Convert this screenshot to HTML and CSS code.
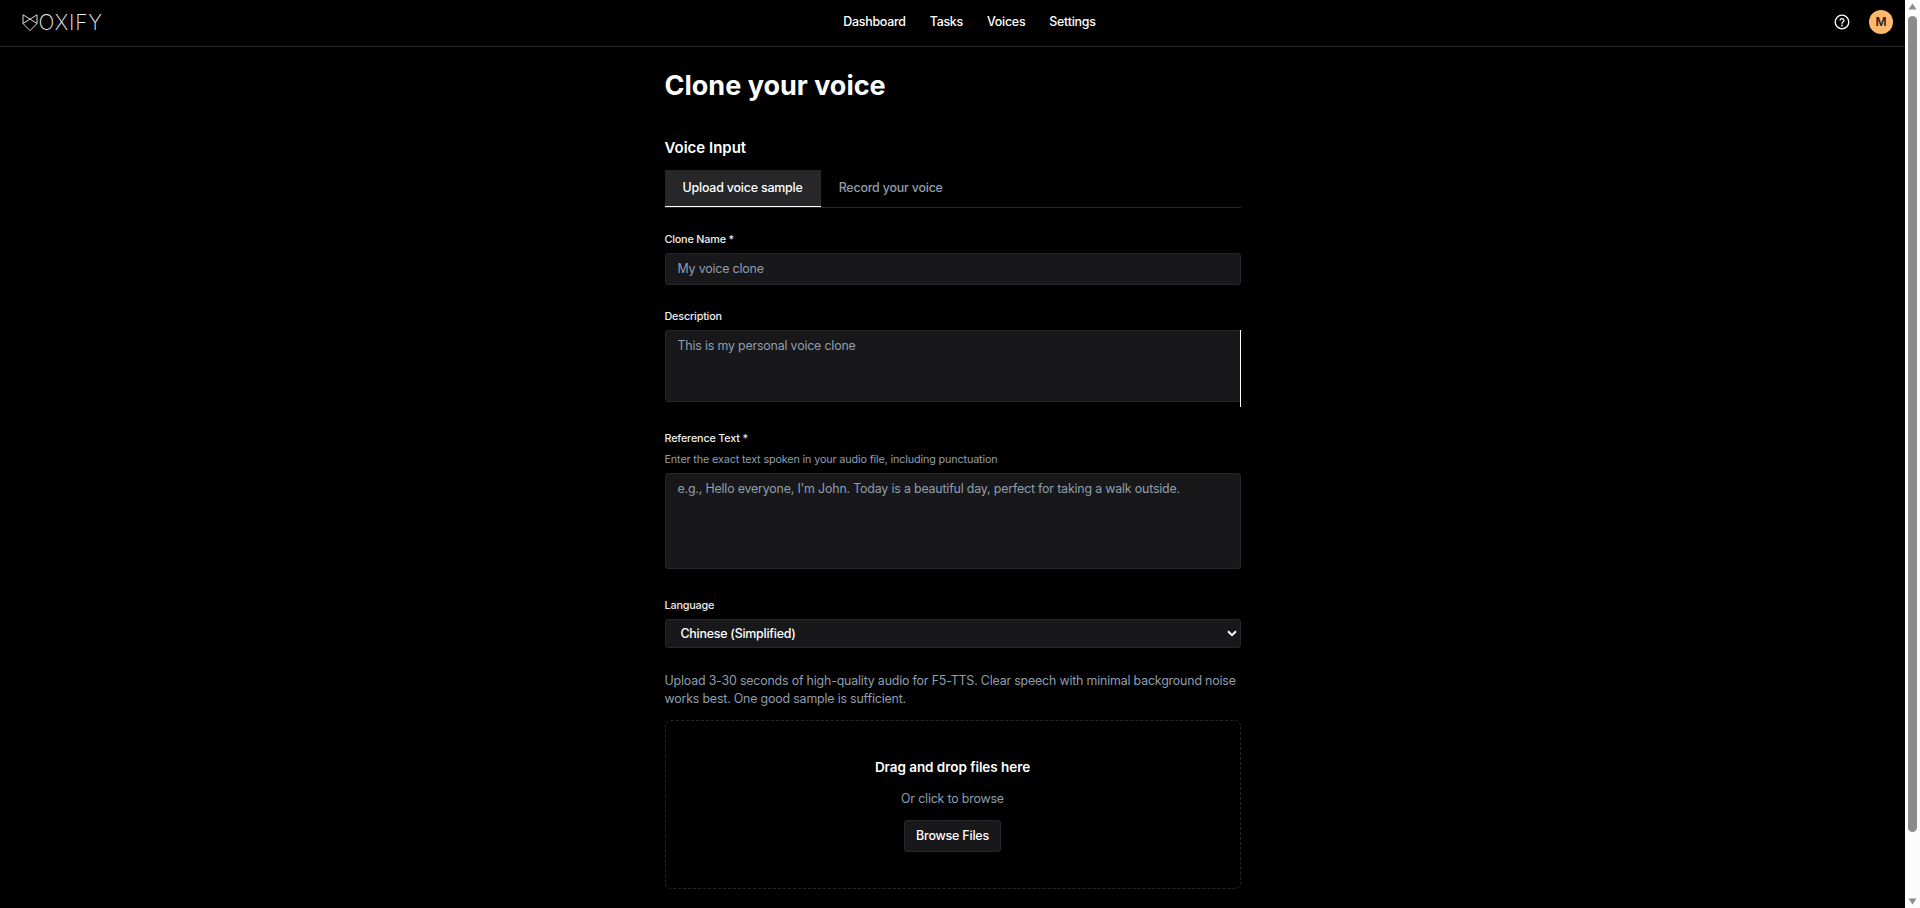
FILE: index.html
```html
<!DOCTYPE html>
<html lang="en">
<head>
<meta charset="utf-8">
<title>Voxify - Clone your voice</title>
<link rel="stylesheet" href="styles.css">
</head>
<body>
<div class="page">
  <header class="header">
    <a class="logo">
      <svg class="logo-mark" width="16" height="18" viewBox="0 0 16 18"><path d="M1 .8v8.700L8 16.600l7-7.100V.8L1 9.500M1 .8l14 8.700" /></svg>
      <span class="logo-text">OXIFY</span>
    </a>
    <nav class="nav"><a>Dashboard</a><a>Tasks</a><a>Voices</a><a>Settings</a></nav>
    <div class="actions">
      <svg class="help" width="16" height="16" viewBox="0 0 16 16"><circle cx="8" cy="8" r="6.800"/><path d="M6.100 6.200a1.950 1.950 0 0 1 3.850.4c0 1.300-1.950 1.600-1.950 2.700M8 11v1.100"/></svg>
      <span class="avatar">M</span>
    </div>
  </header>
  <main class="main">
    <h1 class="title">Clone your voice</h1>
    <h2 class="subtitle">Voice Input</h2>
    <div class="tabs"><button class="tab tab-active">Upload voice sample</button><button class="tab">Record your voice</button></div>
    <label class="label">Clone Name *</label>
    <input class="field name" placeholder="My voice clone">
    <label class="label">Description</label>
    <div class="description"><textarea class="field desc" placeholder="This is my personal voice clone"></textarea></div>
    <label class="label">Reference Text *</label>
    <p class="hint">Enter the exact text spoken in your audio file, including punctuation</p>
    <textarea class="field ref" placeholder="e.g., Hello everyone, I'm John. Today is a beautiful day, perfect for taking a walk outside."></textarea>
    <label class="label">Language</label>
    <div class="field select"><span>Chinese (Simplified)</span><svg width="10" height="7" viewBox="0 0 10 7"><path d="M1 1.200l4 4 4-4"/></svg></div>
    <p class="info">Upload 3-30 seconds of high-quality audio for F5-TTS. Clear speech with minimal background noise works best. One good sample is sufficient.</p>
    <div class="drop">
      <strong class="drop-title">Drag and drop files here</strong>
      <span class="drop-text">Or click to browse</span>
      <button class="browse">Browse Files</button>
    </div>
  </main>
</div>
<div class="scrollbar">
  <svg width="9" height="7" viewBox="0 0 9 7"><path d="M4.500 .5L8.500 6.500H.5z"/></svg>
  <div class="thumb"></div>
  <svg width="9" height="7" viewBox="0 0 9 7"><path d="M4.500 6.500L8.500 .5H.5z"/></svg>
</div>
</body>
</html>
```
FILE: styles.css
```css
* { box-sizing: border-box; margin: 0; padding: 0; }
body { display: flex; height: 908px; overflow: hidden; background: #000; color: #fff; font: 12.4px/18px Inter, sans-serif; letter-spacing: -0.18px; }
button, input, textarea { font: inherit; letter-spacing: inherit; color: inherit; border: 0; background: none; outline: none; }
.page { flex: 1; }
.header { display: flex; justify-content: space-between; align-items: center; height: 47px; padding: 0 12px 3px 21px; border-bottom: 1px solid #27272a; }
.logo { display: flex; align-items: center; width: 84px; padding: 2px 0 0 .5px; }
.logo-mark { flex: none; fill: none; stroke: #dcdcdc; stroke-width: 1; }
.logo-text { margin-left: 1px; font-size: 21px; font-weight: 200; line-height: 20px; letter-spacing: .8px; color: #eee; }
.nav { display: flex; gap: 24px; padding-top: 1px; font-weight: 500; letter-spacing: -0.25px; }
.actions { display: flex; justify-content: flex-end; align-items: center; gap: 19px; }
.help { fill: none; stroke: #fff; stroke-width: 1.3; stroke-linecap: round; }
.avatar { width: 24px; height: 24px; border-radius: 50%; background: #ffb86c; color: #222; font-size: 12px; font-weight: 600; line-height: 24px; text-align: center; }
.main { width: 576px; margin: 0 auto; padding-top: 19px; }
.title { height: 40px; font-size: 27px; font-weight: 700; line-height: 40px; letter-spacing: 0; }
.subtitle { height: 24px; margin-top: 30px; font-size: 15px; font-weight: 600; line-height: 24px; letter-spacing: 0; }
.tabs { display: flex; height: 38px; margin: 10px 0 24px; border-bottom: 1px solid #27272a; }
.tab { height: 37px; padding: 0 18px; border-bottom: 1px solid transparent; font-weight: 500; color: #8f9fae; }
.tab-active { background: #27272a; border-bottom-color: #fff; color: #fff; }
.label { display: block; height: 16px; margin-bottom: 5px; font-size: 10.8px; font-weight: 500; line-height: 16px; color: #eee; }
.field { display: block; width: 100%; padding: 6px 12px; border: 1px solid #27272a; border-radius: 3px; background: #18181b; resize: none; }
.field::placeholder { color: #8f9fae; opacity: 1; }
.name { height: 32px; margin-bottom: 24px; padding-bottom: 7px; }
.description { position: relative; height: 77px; margin-bottom: 24px; }
.description::after { content: ""; position: absolute; top: 0; right: 0; width: 1px; height: 77px; background: #fff; }
.desc { height: 72px; }
.hint { height: 16px; margin-bottom: 5px; font-size: 10.8px; line-height: 16px; letter-spacing: -0.14px; color: #8f9fae; }
.ref { height: 96px; margin-bottom: 29px; }
.select { display: flex; justify-content: space-between; align-items: center; height: 29px; padding: 0 3px 0 15px; font-weight: 500; letter-spacing: -0.23px; }
.select svg { fill: none; stroke: #fff; stroke-width: 2; }
.info { margin: 24px 0 12px; color: #8f9fae; }
.drop { display: flex; flex-direction: column; align-items: center; height: 169px; padding-top: 36px; border: 1px dashed #27272a; border-radius: 6px; }
.drop-title { font-size: 13.5px; font-weight: 600; line-height: 20px; letter-spacing: -0.05px; }
.drop-text { margin: 13px 0 12px; color: #8f9fae; }
.browse { width: 97px; height: 32px; border: 1px solid #27272a; border-radius: 3px; background: #18181b; font-weight: 500; }
.scrollbar { display: flex; flex-direction: column; align-items: center; width: 15px; padding: 3px 0; background: #fcfcfc; }
.scrollbar svg { fill: #8b8b8b; }
.thumb { width: 9px; height: 816px; margin: 6px 0 66px; border-radius: 5px; background: #8b8b8b; }
```
